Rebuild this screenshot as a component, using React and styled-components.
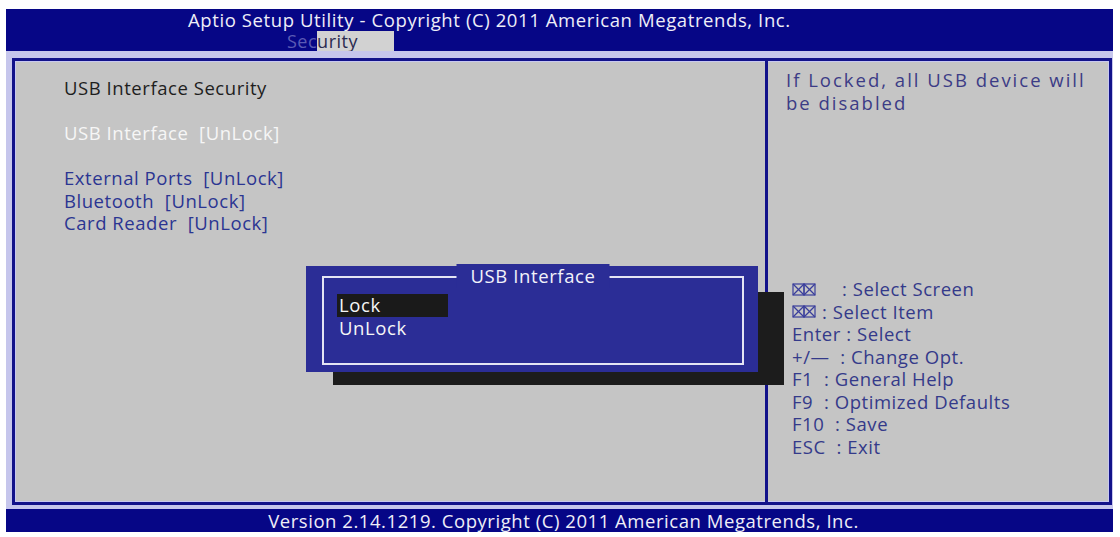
import React from "react";
import styled, { createGlobalStyle } from "styled-components";

const GlobalStyle = createGlobalStyle`
  html, body { margin: 0; padding: 0; background: #ffffff; }
  body { font-family: "Open Sans", "DejaVu Sans", sans-serif; }
`;

const Screen = styled.div`
  width: 1120px;
  height: 537px;
  box-sizing: border-box;
  padding: 9px 7px 5px 6px;
  display: flex;
  flex-direction: column;
`;

const Header = styled.header`
  height: 42px;
  flex: none;
  background: #060686;
  display: flex;
  flex-direction: column;
  align-items: flex-start;
`;

const Title = styled.div`
  color: #eeeef8;
  font-size: 18.5px;
  line-height: 22px;
  padding-left: 182px;
  letter-spacing: 0.6px;
  white-space: nowrap;
`;

const TabRow = styled.div`
  padding-left: 281px;
  height: 20px;
  display: flex;
  font-size: 18px;
  line-height: 20px;
  letter-spacing: 0.5px;
`;

const TabFaded = styled.span`
  color: #5a5ab4;
`;

const TabActive = styled.span`
  background: #d2d2d2;
  color: #2a2a50;
  padding-right: 36px;
`;

const Body = styled.main`
  flex: 1;
  background: #c6c6ec;
  padding: 7px 1px 4px 6px;
  display: flex;
`;

const Frame = styled.section`
  position: relative;
  flex: 1;
  border: 3px solid #12128a;
  box-shadow: inset 0 0 0 1px #c8c8f0;
  background: #c5c5c5;
  display: grid;
  grid-template-columns: 750px 3px 1fr;
`;

const LeftPanel = styled.div`
  padding: 16px 0 0 49px;
  font-size: 18.5px;
  line-height: 22.5px;
  letter-spacing: 0.55px;
`;

const Line = styled.div`
  height: 22.5px;
  white-space: nowrap;
  color: ${(p) =>
    p.$kind === "heading" ? "#1e1e1e" : p.$kind === "active" ? "#f6f6f6" : "#2b3592"};
`;

const Divider = styled.div`
  background: #12128a;
`;

const RightPanel = styled.div`
  padding: 7px 0 0 18px;
  display: flex;
  flex-direction: column;
`;

const HelpText = styled.div`
  color: #3c3c86;
  font-size: 18.5px;
  line-height: 23px;
  letter-spacing: 2px;
  width: 320px;
`;

const Keys = styled.div`
  margin-top: 164px;
  padding-left: 6px;
  color: #343a8a;
  font-size: 18.5px;
  line-height: 22.5px;
  letter-spacing: 0.55px;
`;

const KeyRow = styled.div`
  display: flex;
  align-items: center;
  height: 22.5px;
  white-space: nowrap;
`;

const KeyGap = styled.span`
  display: inline-block;
  width: ${(p) => p.$w || 0}px;
`;

const DialogShadow = styled.div`
  position: absolute;
  left: 318px;
  top: 231px;
  width: 451px;
  height: 93px;
  background: #1c1c1c;
`;

const Dialog = styled.div`
  position: absolute;
  left: 291px;
  top: 205px;
  width: 452px;
  height: 106px;
  background: #2b2d96;
  box-sizing: border-box;
  padding: 10px 14px 7px 16px;
  display: flex;
`;

const DialogBox = styled.div`
  position: relative;
  flex: 1;
  border: 2px solid #e4e4f4;
  padding: 16px 0 0 13px;
`;

const DialogTitle = styled.div`
  position: absolute;
  top: -14px;
  left: 50%;
  transform: translateX(-50%);
  background: #2b2d96;
  color: #f2f2fa;
  font-size: 18.5px;
  line-height: 24px;
  padding: 0 14px;
  white-space: nowrap;
  letter-spacing: 0.6px;
`;

const Option = styled.div`
  width: 111px;
  height: 22.5px;
  line-height: 22.5px;
  font-size: 18.5px;
  letter-spacing: 0.6px;
  color: #f6f6f6;
  padding-left: 2px;
  box-sizing: border-box;
  background: ${(p) => (p.$selected ? "#1a1a1a" : "transparent")};
`;

const Footer = styled.footer`
  height: 23px;
  flex: none;
  background: #060686;
  color: #eeeef8;
  font-size: 18.5px;
  line-height: 23px;
  text-align: center;
  padding-left: 8px;
  white-space: nowrap;
  letter-spacing: 0.55px;
`;

const ArrowBoxes = () => (
  <svg width="26" height="15" viewBox="0 0 26 15" style={{ marginRight: 4 }}>
    <g stroke="#3a3e9c" strokeWidth="1.2" fill="none">
      <rect x="1" y="2" width="11" height="11" />
      <line x1="1" y1="2" x2="12" y2="13" />
      <line x1="12" y1="2" x2="1" y2="13" />
      <rect x="12" y="2" width="11" height="11" />
      <line x1="12" y1="2" x2="23" y2="13" />
      <line x1="23" y1="2" x2="12" y2="13" />
    </g>
  </svg>
);

export default function App() {
  return (
    <>
      <GlobalStyle />
      <Screen>
        <Header>
          <Title>Aptio Setup Utility - Copyright (C) 2011 American Megatrends, Inc.</Title>
          <TabRow>
            <TabFaded>Sec</TabFaded>
            <TabActive>urity</TabActive>
          </TabRow>
        </Header>
        <Body>
          <Frame>
            <LeftPanel>
              <Line $kind="heading">USB Interface Security</Line>
              <Line />
              <Line $kind="active">USB Interface&nbsp; [UnLock]</Line>
              <Line />
              <Line>External Ports&nbsp; [UnLock]</Line>
              <Line>Bluetooth&nbsp; [UnLock]</Line>
              <Line>Card Reader&nbsp; [UnLock]</Line>
            </LeftPanel>
            <Divider />
            <RightPanel>
              <HelpText>If Locked, all USB device will be disabled</HelpText>
              <Keys>
                <KeyRow>
                  <ArrowBoxes />
                  <KeyGap $w={20} />: Select Screen
                </KeyRow>
                <KeyRow>
                  <ArrowBoxes />: Select Item
                </KeyRow>
                <KeyRow>Enter : Select</KeyRow>
                <KeyRow>+/—&nbsp; : Change Opt.</KeyRow>
                <KeyRow>F1&nbsp; : General Help</KeyRow>
                <KeyRow>F9&nbsp; : Optimized Defaults</KeyRow>
                <KeyRow>F10&nbsp; : Save</KeyRow>
                <KeyRow>ESC&nbsp; : Exit</KeyRow>
              </Keys>
            </RightPanel>
            <DialogShadow />
            <Dialog>
              <DialogBox>
                <DialogTitle>USB Interface</DialogTitle>
                <Option $selected>Lock</Option>
                <Option>UnLock</Option>
              </DialogBox>
            </Dialog>
          </Frame>
        </Body>
        <Footer>Version 2.14.1219. Copyright (C) 2011 American Megatrends, Inc.</Footer>
      </Screen>
    </>
  );
}
